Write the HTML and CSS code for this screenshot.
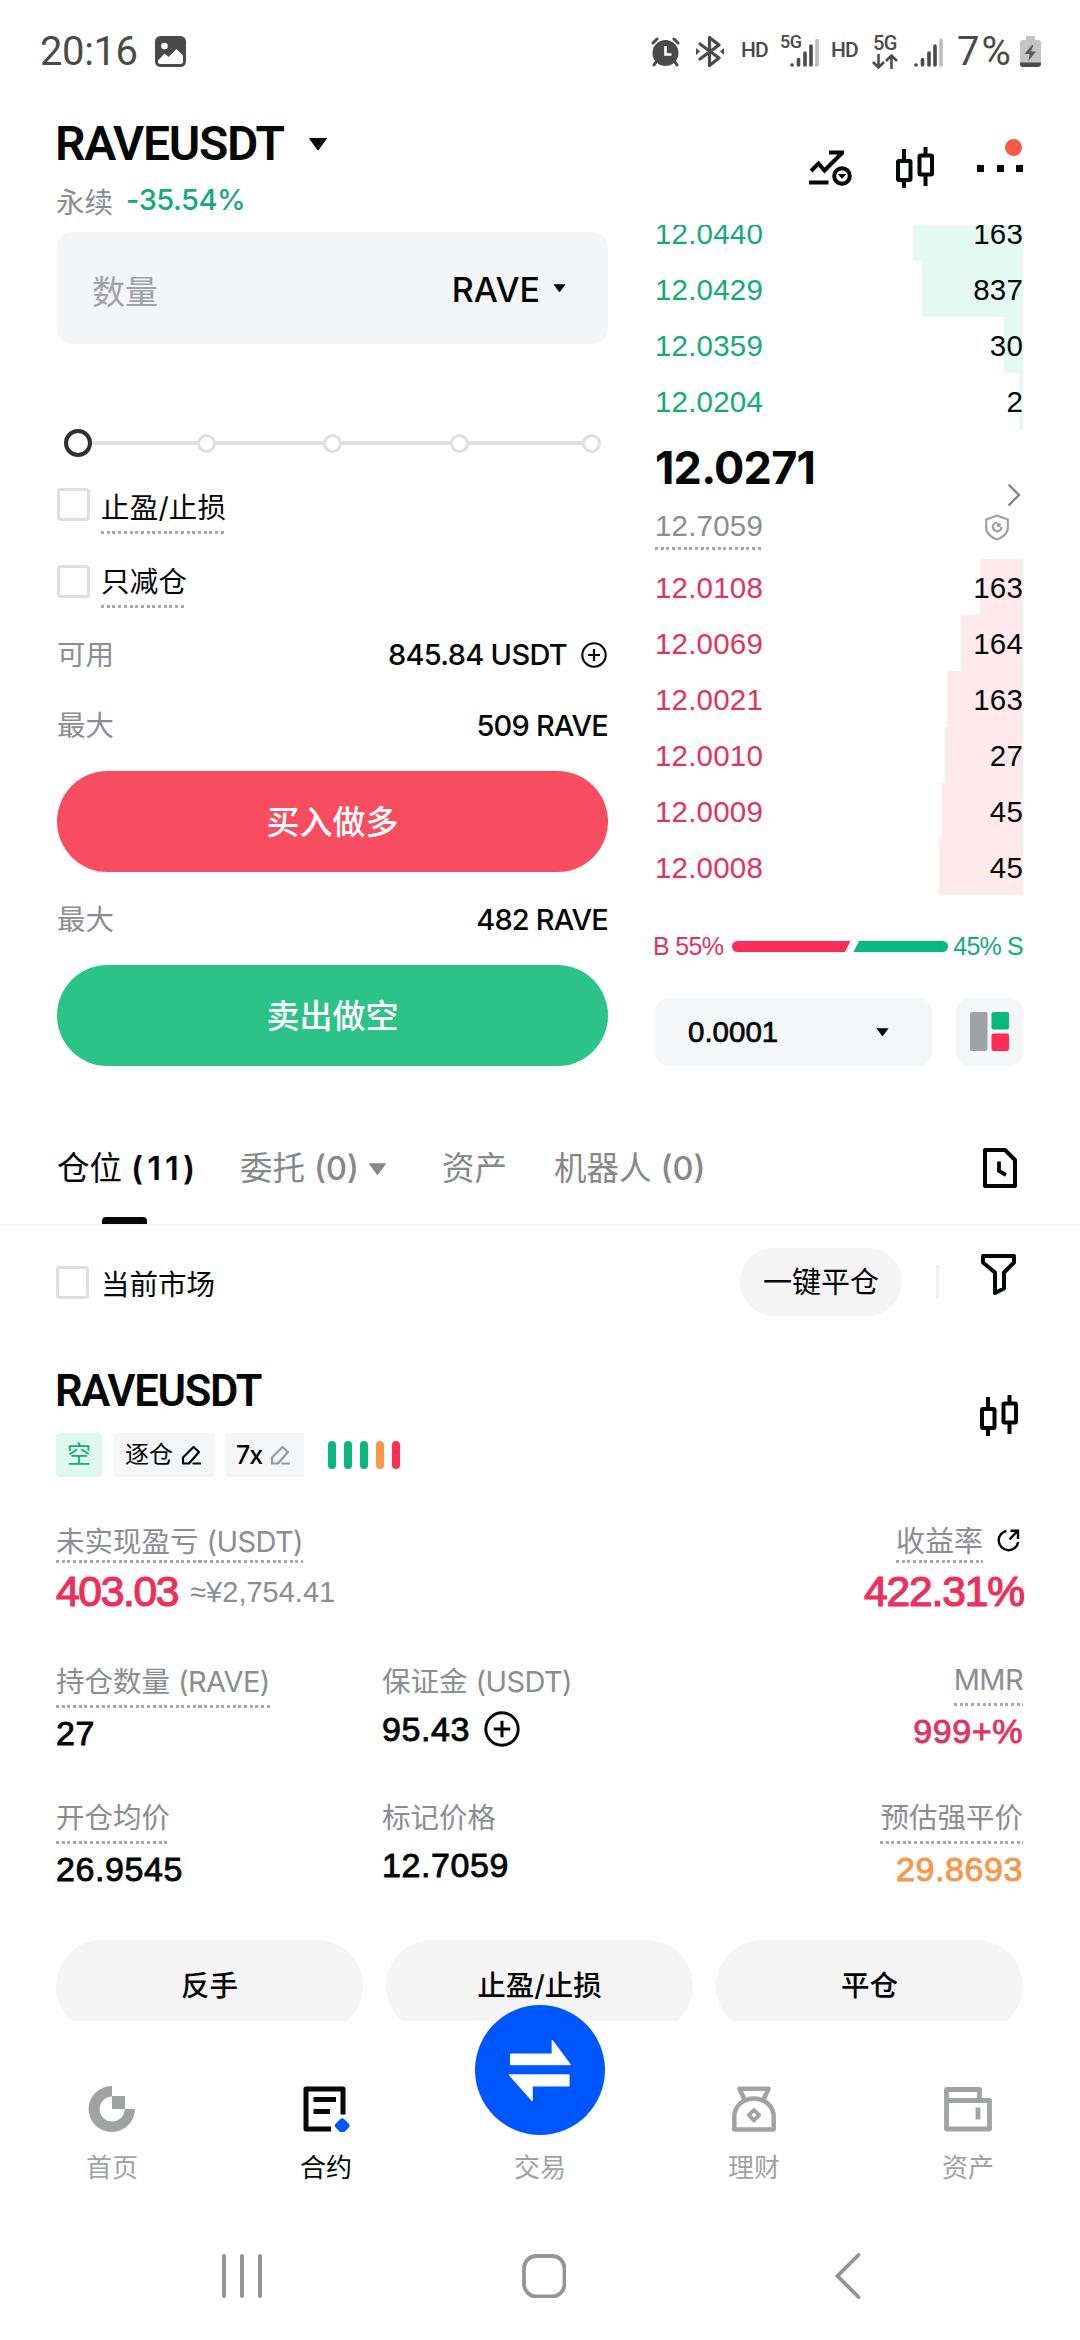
FILE: index.html
```html
<!DOCTYPE html>
<html lang="zh-CN">
<head>
<meta charset="utf-8">
<title>RAVEUSDT 永续</title>
<link rel="stylesheet" href="styles.css">
</head>
<body>
<svg class="defs" aria-hidden="true">
  <symbol id="candles" viewBox="0 0 38 42">
    <g fill="none" stroke="currentColor" stroke-width="4"><path d="M8 2v12M8 34v7M29.500 0v9M29.500 28v11"/><rect x="2" y="14" width="12.500" height="19" rx="1"/><rect x="23.500" y="8.500" width="12.500" height="19" rx="1"/></g>
  </symbol>
  <symbol id="caret" viewBox="0 0 20 13"><path d="M1.500 .5h17L10 12z" fill="currentColor" stroke="currentColor" stroke-linejoin="round"/></symbol>
  <symbol id="pencil" viewBox="0 0 21 20"><path d="M11.500 18.500H20M2 18.500v-6L12.500 2l5.500 5-10 11.500z" fill="none" stroke="currentColor" stroke-width="2.200" stroke-linejoin="round"/></symbol>
  <symbol id="plus" viewBox="0 0 26 26"><circle cx="13" cy="13" r="11.700" fill="none" stroke="currentColor" stroke-width="2.100"/><path d="M13 7v12M7 13h12" stroke="currentColor" stroke-width="2.200"/></symbol>
</svg>

<header class="status">
  <span class="clock">20:16</span>
  <svg class="st-photo" viewBox="0 0 31 31"><rect width="31" height="31" rx="5.500" fill="#4a4a4a"/><circle cx="9.500" cy="10" r="3.300" fill="#fff"/><path d="M3 24.500l6.500-7 4 3.500 8-8 6.500 6.500v6a2.500 2.500 0 0 1-2.500 2.500h-20A2.500 2.500 0 0 1 3 25.500z" fill="#fff"/></svg>
  <span class="grow"></span>
  <svg class="st-alarm" viewBox="0 0 29 30"><g fill="none" stroke="#4a4a4a" stroke-width="3" stroke-linecap="round"><path d="M2 6l4-4M27 6l-4-4M5 25l-2 3M24 25l2 3"/></g><circle cx="14.500" cy="16" r="13" fill="#4a4a4a"/><path d="M14.500 9v8.500h6" fill="none" stroke="#fff" stroke-width="2.600"/></svg>
  <svg class="st-bt" viewBox="0 0 28 31"><path d="M4 8l19 14-9.500 7.500v-28L23 9 4 23" fill="none" stroke="#4a4a4a" stroke-width="3.200" stroke-linejoin="round" stroke-linecap="round"/><path d="M0 12l4 3.500L0 19zM28 12l-4 3.500 4 3.500z" fill="#4a4a4a"/></svg>
  <span class="hd">HD</span>
  <span class="g5 g5-a">5G</span>
  <svg class="st-sig sig-a" viewBox="0 0 29 29"><g stroke="#4a4a4a" stroke-width="3.600" stroke-linecap="round"><path d="M2 27h.1M8.500 21.500V27M15 15v12M21 8v19"/><path d="M27 2.500V27" stroke="#bdbdbd"/></g></svg>
  <span class="hd hd-b">HD</span>
  <span class="g5-col"><span class="g5">5G</span><svg viewBox="0 0 26 15"><path d="M6.500 0v13M1 8l5.500 5.500L12 8M19.500 15V2M14 7l5.500-5.500L25 7" fill="none" stroke="#4a4a4a" stroke-width="2.500"/></svg></span>
  <svg class="st-sig sig-b" viewBox="0 0 29 29"><g stroke="#4a4a4a" stroke-width="3.600" stroke-linecap="round"><path d="M2 27h.1M8.500 21.500V27M15 15v12M21 8v19"/><path d="M27 2.500V27" stroke="#bdbdbd"/></g></svg>
  <span class="pct">7%</span>
  <svg class="st-bat" viewBox="0 0 21 31"><path d="M6 0h9v4h3a3 3 0 0 1 3 3v20H0V7a3 3 0 0 1 3-3h3z" fill="#c4c4c4"/><path d="M0 26.500h21V28a3 3 0 0 1-3 3H3a3 3 0 0 1-3-3z" fill="#4a4a4a"/><path d="M12 9L4.500 18h5L8.500 25l7.500-9.500h-5L13.500 9z" fill="#5c5c5c"/></svg>
</header>

<section class="head">
  <div class="pair">
    <div class="pair-name"><h1>RAVEUSDT</h1><svg class="caret-l"><use href="#caret"/></svg></div>
    <div class="pair-sub"><span>永续</span><b>-35.54%</b></div>
  </div>
  <div class="tools">
    <svg class="t-chart" viewBox="0 0 43 36"><g fill="none" stroke="#060707" stroke-width="4"><path d="M2 21l7.500-7.500 6 7L33.500 2.500M20 2.500h15M0 32.500h19.500"/><circle cx="33" cy="26" r="7.800" stroke-width="4"/></g><path d="M28.800 24h8.400L33 29z" fill="#060707"/></svg>
    <svg class="t-candles"><use href="#candles"/></svg>
    <span class="more"><i></i><i></i><i></i><em></em></span>
  </div>
</section>

<main class="trade">
  <div class="form">
    <div class="amount"><span class="ph">数量</span><span class="unit">RAVE</span><svg class="caret-s"><use href="#caret"/></svg></div>
    <div class="slider"><i class="on"></i><s></s><i></i><s></s><i></i><s></s><i></i><s class="last"></s><i></i></div>
    <div class="check"><i class="box"></i><span class="dot">止盈/止损</span></div>
    <div class="check check-2"><i class="box"></i><span class="dot">只减仓</span></div>
    <div class="kv avail"><span>可用</span><b class="ls-avail">845.84 USDT</b><svg class="plus-s"><use href="#plus"/></svg></div>
    <div class="kv max-a"><span>最大</span><b>509 RAVE</b></div>
    <button class="cta buy">买入做多</button>
    <div class="kv max-b"><span>最大</span><b>482 RAVE</b></div>
    <button class="cta sell">卖出做空</button>
  </div>

  <div class="book">
    <div class="asks">
      <div class="row"><span>12.0440</span><em style="width:110px">163</em></div>
      <div class="row"><span>12.0429</span><em style="width:101px">837</em></div>
      <div class="row"><span>12.0359</span><em style="width:19px">30</em></div>
      <div class="row"><span>12.0204</span><em style="width:4px">2</em></div>
    </div>
    <div class="mid">
      <div><div class="last-price">12.0271</div><div class="mark dot">12.7059</div></div>
      <div class="mid-icons">
        <svg class="chev" viewBox="0 0 14 24"><path d="M1.500 1.500L12 12 1.500 22.500" fill="none" stroke="#85888b" stroke-width="2.400"/></svg>
        <svg class="shield" viewBox="0 0 22 25"><g fill="none" stroke="#a0a2a4"><path d="M11 1.500L21 5v8c0 5-5 9-10 10.500C6 22 1 18 1 13V5z" stroke-width="2"/><path d="M11 8a4 4 0 1 0 4.200 4.200" stroke-width="2.200"/></g><rect x="11" y="8.500" width="3.500" height="3.500" fill="#a0a2a4"/></svg>
      </div>
    </div>
    <div class="bids">
      <div class="row"><span>12.0108</span><em style="width:43px">163</em></div>
      <div class="row"><span>12.0069</span><em style="width:62px">164</em></div>
      <div class="row"><span>12.0021</span><em style="width:76px">163</em></div>
      <div class="row"><span>12.0010</span><em style="width:78px">27</em></div>
      <div class="row"><span>12.0009</span><em style="width:81px">45</em></div>
      <div class="row"><span>12.0008</span><em style="width:84px">45</em></div>
    </div>
    <div class="ratio"><span class="b">B 55%</span>
      <svg viewBox="0 0 216 11"><path d="M5.500 0H118.500L113 11H5.500a5.500 5.500 0 0 1 0-11z" fill="#fd2c59"/><path d="M127 0h83.500a5.500 5.500 0 0 1 0 11H121.500z" fill="#07b97c"/></svg>
      <span class="s">45% S</span></div>
    <div class="prec"><div class="select"><span>0.0001</span><svg class="caret-s"><use href="#caret"/></svg></div>
      <div class="layout"><svg viewBox="0 0 39 39"><rect width="17.500" height="39" rx="2" fill="#a0a3a6"/><rect x="21.500" width="17.500" height="17.500" rx="2" fill="#07b97c"/><rect x="21.500" y="21.500" width="17.500" height="17.500" rx="2" fill="#fd2c59"/></svg></div></div>
  </div>
</main>

<nav class="tabs">
  <span class="tab on">仓位 <b>(11)</b></span>
  <span class="tab t2">委托 <b>(0)</b><svg class="caret-t"><use href="#caret"/></svg></span>
  <span class="tab t3">资产</span>
  <span class="tab t4">机器人 <b>(0)</b></span>
  <svg class="history" viewBox="0 0 34 40"><path d="M2 2h20l10 10v26H2z" fill="none" stroke="#060707" stroke-width="4" stroke-linejoin="round"/><path d="M16 13.500V23l7 4" fill="none" stroke="#060707" stroke-width="3.800"/></svg>
</nav>

<section class="filter">
  <i class="box"></i><span class="cur">当前市场</span>
  <button class="closeall">一键平仓</button>
  <i class="vr"></i>
  <svg class="funnel" viewBox="0 0 35 41"><path d="M2 2h31v6.500L23 18.500v16l-9 4.500V18.500L2 8.500z" fill="none" stroke="#060707" stroke-width="4" stroke-linejoin="round"/></svg>
</section>

<section class="position">
  <div class="pos-head">
    <div>
      <h2>RAVEUSDT</h2>
      <div class="tags">
        <span class="tag short">空</span>
        <span class="tag mode">逐仓<svg><use href="#pencil"/></svg></span>
        <span class="tag lev">7x<svg><use href="#pencil"/></svg></span>
        <span class="adl"><i></i><i></i><i></i><i class="o"></i><i class="r"></i></span>
      </div>
    </div>
    <svg class="p-candles"><use href="#candles"/></svg>
  </div>

  <div class="pnl">
    <div><span class="lab dot">未实现盈亏 <u>(USDT)</u></span><div class="big"><b>403.03</b><small>≈¥2,754.41</small></div></div>
    <div class="right"><div class="roi"><span class="lab dot">收益率</span><svg viewBox="0 0 23 23"><g fill="none" stroke="#060707" stroke-width="2.400"><path d="M9.500 1.800A9.800 9.800 0 1 0 21.200 13"/><path d="M12.500 10.500L20.500 2M13.500 1.700H21V10"/></g></svg></div><div class="big pc"><b>422.31%</b></div></div>
  </div>

  <div class="stats">
    <div class="st"><span class="lab dot">持仓数量 <u>(RAVE)</u></span><b>27</b></div>
    <div class="st flat"><span class="lab">保证金 <u>(USDT)</u></span><b class="margin">95.43<svg><use href="#plus"/></svg></b></div>
    <div class="st right mmr"><span class="lab dot">MMR</span><b class="red">999+%</b></div>
    <div class="st"><span class="lab dot">开仓均价</span><b>26.9545</b></div>
    <div class="st flat"><span class="lab">标记价格</span><b>12.7059</b></div>
    <div class="st right"><span class="lab dot">预估强平价</span><b class="orange">29.8693</b></div>
  </div>

  <div class="actions"><button>反手</button><button>止盈/止损</button><button>平仓</button></div>
</section>

<footer class="nav">
  <a><svg viewBox="0 0 48 46"><path d="M24 0v10.500a12.500 12.500 0 1 0 12.700 12.500H47A23.200 23 0 1 1 24 0z" fill="#a0a2a4"/><rect x="24" y="10" width="13" height="13" fill="#a0a2a4"/></svg>首页</a>
  <a class="on"><svg viewBox="0 0 48 46"><path d="M41 28.500V3H4v40h25" fill="none" stroke="#060707" stroke-width="5" stroke-linejoin="round"/><path d="M11.500 13.500H34M11.500 25.500H28" stroke="#060707" stroke-width="5"/><rect x="34.200" y="33.700" width="12" height="12" rx="3" transform="rotate(45 40.200 39.700)" fill="#0056ff"/></svg>合约</a>
  <a class="swap"><span class="fab"><svg viewBox="0 0 64 64"><path d="M1.500 15.500H44.500V1L63.500 26.500H1.500z M62 37H0L24 64V48.500H62z" fill="#fff" stroke="#fff"/></svg></span>交易</a>
  <a><svg viewBox="0 0 48 46"><g fill="none" stroke="#a0a2a4" stroke-width="4.500" stroke-linejoin="round"><path d="M14 12.500L9.500 2.800h29L34 12.500M4.300 43.500V31c0-11 9-18.500 19.700-18.500S43.700 20 43.700 31v12.500z"/><path d="M24 24l5.200 5.200L24 34.400l-5.200-5.200z" stroke-width="3.800"/></g></svg>理财</a>
  <a><svg viewBox="0 0 48 46"><path d="M2.500 14.500h43V43h-43zM2.500 14.500V3.500h33v11M34 21.500v12" fill="none" stroke="#a0a2a4" stroke-width="4.800" stroke-linejoin="round"/></svg>资产</a>
</footer>

<div class="sys">
  <svg viewBox="0 0 40 44"><path d="M2 2v40M20 2v40M38 2v40" stroke="#949494" stroke-width="4" stroke-linecap="round"/></svg>
  <svg class="homekey" viewBox="0 0 44 44"><rect x="2" y="2" width="40.500" height="40.500" rx="12.500" fill="none" stroke="#949494" stroke-width="3.800"/></svg>
  <svg class="back" viewBox="0 0 26 46"><path d="M23.500 2L2.500 23l21 21" fill="none" stroke="#949494" stroke-width="3.800" stroke-linecap="round"/></svg>
</div>
</body>
</html>
```
FILE: styles.css
```css
* { box-sizing: border-box; margin: 0; padding: 0; }
html, body { width: 1080px; height: 2340px; overflow: hidden; background: #fefefe; }
body { font-family: Inter, "Noto Sans CJK SC", sans-serif; font-size: 28.500px; color: #060707; white-space: nowrap; }
i, em, u, s { font-style: normal; text-decoration: none; }
b { font-weight: 500; }
svg { display: block; flex: none; }
button { border: 0; font-family: inherit; color: inherit; }
.defs { position: absolute; width: 0; height: 0; }
.grow { flex: 1; }
.box { flex: none; width: 33px; height: 33px; border: 3px solid #dfdfe0; border-radius: 4px; background: #fff; }
.dot { background: repeating-linear-gradient(90deg, #a6a8a9 0 3px, transparent 3px 5.700px) left bottom / 100% 3px no-repeat; }

/* status bar */
.status { display: flex; align-items: flex-start; height: 105px; padding: 36px 39px 0 40px; color: #4a4a4a; font-family: Roboto, sans-serif; }
.clock { font-size: 40px; line-height: 31px; width: 115px; letter-spacing: -.4px; }
.st-photo { width: 31px; height: 31px; }
.st-alarm { width: 29px; height: 30px; margin-top: 1px; }
.st-bt { width: 28px; height: 31px; margin-left: 16px; }
.hd { font-size: 21px; font-weight: 500; line-height: 29px; width: 39px; margin-left: 17px; letter-spacing: -1px; }
.g5 { font-size: 18px; font-weight: 500; line-height: 12px; letter-spacing: -.5px; }
.g5-a { width: 10px; }
.st-sig { width: 29px; height: 29px; margin-top: 2px; }
.hd-b { margin-left: 12px; width: 41px; }
.g5-col { display: flex; flex-direction: column; align-items: center; width: 26px; gap: 4px; }
.g5-col .g5 { font-size: 20px; line-height: 14px; }
.g5-col svg { width: 26px; height: 15px; }
.sig-b { margin-left: 16px; }
.pct { font-size: 40px; line-height: 31px; margin-left: 14px; width: 63px; letter-spacing: 2px; }
.st-bat { width: 21px; height: 31px; }

/* header */
.head { display: flex; justify-content: space-between; height: 120px; padding: 0 57px 0 56px; }
.pair-name { display: flex; align-items: center; height: 78px; }
h1 { font: 600 48px/80px Roboto, sans-serif; letter-spacing: -1.300px; width: 253px; margin-left: -1px; }
.caret-l { width: 20px; height: 13px; }
.pair-sub { display: flex; gap: 13px; height: 36px; line-height: 36px; color: #8b8d90; }
.pair-sub span { padding-top: 2px; }
.pair-sub b { font-size: 29px; line-height: 33px; color: #14ab78; letter-spacing: -.5px; }
.tools { display: flex; align-items: flex-start; padding-top: 42px; }
.t-chart { width: 43px; height: 36px; margin-top: 3px; }
.t-candles { width: 38px; height: 42px; margin-left: 44px; }
.more { position: relative; display: flex; justify-content: space-between; width: 46px; margin-left: 43px; padding-top: 18px; }
.more i { width: 7px; height: 7px; background: #060707; }
.more em { position: absolute; right: 1px; top: -8px; width: 17px; height: 17px; border-radius: 50%; background: #fb5a49; }

/* trade area */
.trade { display: flex; justify-content: space-between; height: 905px; padding: 0 57px 0 57px; }
.form { width: 551px; padding-top: 7px; }
.amount { display: flex; align-items: center; height: 112px; padding: 0 42px 0 35px; border-radius: 16px; background: #f3f5f7; }
.ph { font-size: 33px; color: #a0a2a5; flex: 1; padding-top: 4px; }
.unit { font-size: 34px; font-weight: 500; padding-top: 2px; }
.caret-s { width: 13px; height: 9px; margin-left: 13px; }
.slider { display: flex; align-items: center; height: 28px; margin: 85px 7px 0 7px; }
.slider i { flex: none; width: 19px; height: 19px; border: 3px solid #dfdfe0; border-radius: 50%; background: #fff; }
.slider .on { width: 28px; height: 28px; border: 4px solid #2f3031; }
.slider s { width: 107.500px; height: 4px; background: #dfdfe0; }
.slider .last { flex: 1; }
.slider .on + s { width: 104.500px; }
.check { display: flex; gap: 12px; height: 46px; margin-top: 31px; line-height: 40px; letter-spacing: .2px; }
.check .dot { height: 46px; margin-left: -1px; }
.check-2 { margin-top: 28px; }
.check-2 .box { margin-top: 3px; }
.kv { display: flex; align-items: center; justify-content: space-between; height: 40px; line-height: 40px; }
.kv span { color: #8b8d90; flex: 1; }
.kv b { font-size: 29px; letter-spacing: -.8px; }
.kv .ls-avail { letter-spacing: -.7px; }
.avail { margin-top: 27px; }
.plus-s { width: 26px; height: 26px; margin: 0 1px 0 14px; }
.max-a { margin-top: 31px; }
.cta { display: block; width: 551px; height: 101px; margin-top: 25px; border-radius: 51px; color: #fff; font-size: 33px; font-weight: 500; line-height: 103px; }
.buy { background: #f84d60; }
.sell { background: #2cc388; }
.max-b { margin-top: 28px; }

.book { width: 368px; }
.asks { display: flex; flex-direction: column; justify-content: flex-end; height: 204px; overflow: hidden; }
.row { display: flex; justify-content: space-between; flex: none; height: 56px; font: 29.500px/57px "Liberation Sans", sans-serif; letter-spacing: .2px; }
.row em { direction: rtl; }
.asks span { color: #14ab78; }
.asks em { background: #e3f9f1; }
.bids span { color: #de3560; }
.bids em { background: #fee9ed; }
.mid { display: flex; justify-content: space-between; height: 130px; padding-top: 14px; }
.last-price { font-size: 45px; font-weight: 700; line-height: 50px; letter-spacing: -.8px; }
.mark { width: 108px; height: 47px; margin-top: 10px; font: 29.500px/45px "Liberation Sans", sans-serif; color: #8b8d90; letter-spacing: .2px; }
.mid-icons { display: flex; flex-direction: column; align-items: flex-end; padding-top: 40px; }
.chev { width: 14px; height: 24px; margin-right: 2px; }
.shield { width: 24px; height: 27px; margin: 7px 14px 0 0; }
.ratio { display: flex; align-items: center; justify-content: space-between; height: 30px; margin-top: 36px; font: 25px/31px "Liberation Sans", sans-serif; }
.ratio svg { width: 216px; height: 11px; }
.ratio .b { color: #de3560; letter-spacing: -.7px; width: 74px; margin-left: -2px; }
.ratio .s { color: #14ab78; letter-spacing: -.8px; }
.prec { display: flex; justify-content: space-between; margin-top: 37px; }
.select { display: flex; align-items: center; justify-content: space-between; width: 277px; height: 68px; padding: 0 43px 0 33px; border-radius: 14px; background: #f4f6f7; font: 29.500px/68px "Liberation Sans", sans-serif; -webkit-text-stroke: .7px #060707; }
.layout { width: 67px; height: 68px; padding: 14px; border-radius: 14px; background: #f4f6f7; }
.layout svg { width: 39px; height: 39px; }

/* tabs */
.tabs { display: flex; height: 96px; padding: 0 63px 0 57px; border-bottom: 2px solid #f4f4f4; font-size: 32.500px; line-height: 78px; color: #85878a; }
.tab { display: flex; gap: 9px; }
.tab.on { position: relative; color: #060707; width: 183px; }
.tab.on b { font-weight: 600; letter-spacing: 4px; }
.tab.on::after { content: ""; position: absolute; left: 45px; bottom: 0; width: 45px; height: 7px; border-radius: 4px 4px 0 0; background: #060707; }
.caret-t { width: 19px; height: 13px; margin-top: 33px; }
.t2 { width: 202px; }
.t3 { width: 112px; }
.history { width: 34px; height: 40px; margin: 18px 0 0 auto; }

/* filter row */
.filter { display: flex; align-items: center; height: 90px; padding: 22px 64px 0 56px; }
.cur { margin-left: 12px; flex: 1; }
.closeall { width: 162px; height: 68px; border-radius: 34px; background: #f5f5f5; font-size: 29px; line-height: 67px; }
.vr { width: 3px; height: 34px; margin-left: 34px; background: #efefef; }
.funnel { width: 35px; height: 41px; margin: 0 0 15px 42px; }

/* position card */
.position { padding: 0 57px 0 56px; }
.pos-head { display: flex; justify-content: space-between; margin-top: 50px; }
h2 { font: 600 43.500px/52px Roboto, sans-serif; height: 50px; letter-spacing: -1.300px; margin-left: -1px; }
.tags { display: flex; align-items: center; margin-top: 17px; height: 44px; font-size: 24px; line-height: 46px; }
.tag { display: flex; align-items: center; height: 44px; border-radius: 4px; background: #f4f6f7; }
.short { width: 46px; justify-content: center; background: #dff8ed; color: #14ab78; }
.mode { width: 101px; margin-left: 12px; padding-left: 11px; gap: 8px; }
.lev { width: 79px; margin-left: 10px; padding-left: 11px; gap: 8px; font-size: 25px; font-weight: 500; letter-spacing: -1px; border-radius: 4px 0 0 4px; }
.tag svg { width: 21px; height: 20px; }
.lev svg { color: #98999b; }
.adl { display: flex; gap: 8px; margin-left: 24px; }
.adl i { width: 8px; height: 28px; border-radius: 4px; background: #0cb77d; }
.adl .o { background: #fb974b; }
.adl .r { background: #fd2f57; }
.p-candles { width: 38px; height: 42px; margin: 29px 5px 0 0; }

.lab { display: block; width: max-content; color: #8b8d90; line-height: 36px; }
.lab u { font-size: 29px; letter-spacing: -.6px; }
.right { display: flex; flex-direction: column; align-items: flex-end; }
.pnl { display: flex; justify-content: space-between; margin-top: 47px; }
.pnl .lab { height: 39px; }
.big { display: flex; align-items: center; height: 46px; margin-top: 6px; line-height: 47px; }
.big b { font: 42.500px/48px "Liberation Sans", sans-serif; letter-spacing: -1.300px; color: #ee2f5b; -webkit-text-stroke: 1.200px #ee2f5b; }
.big small { font: 29px/48px "Liberation Sans", sans-serif; margin-left: 12px; color: #8b8d90; }
.big.pc b { letter-spacing: -1.100px; margin-right: -1px; }
.roi { display: flex; gap: 14px; padding-right: 3px; }
.roi .lab { font-size: 29px; }
.roi svg { width: 23px; height: 23px; margin-top: 5px; }

.stats { display: grid; grid-template-columns: 326px 1fr auto; margin-top: 49px; row-gap: 14px; }
.st { height: 122px; }
.st .lab { height: 44px; }
.st > b { display: block; height: 48px; margin-top: 1px; font: 34px/49px "Liberation Sans", sans-serif; letter-spacing: .6px; -webkit-text-stroke: .9px currentColor; }
.flat .lab { height: 40px; }
.margin { display: flex !important; align-items: center; gap: 14px; }
.margin svg { width: 36px; height: 36px; -webkit-text-stroke: 0; }
.mmr .lab { height: 42px; font-size: 29px; line-height: 32px; letter-spacing: -.6px; }
.right .red { color: #de3560; }
.right .orange { color: #f2984f; }

.actions { display: flex; justify-content: space-between; height: 81px; margin-top: 18px; overflow: hidden; }
.actions button { width: 307px; height: 92px; border-radius: 46px; background: #f5f5f5; font-size: 28.500px; font-weight: 500; line-height: 90px; }

/* bottom navigation */
.nav { display: flex; height: 178px; padding: 65px 5px 0; font-size: 26px; line-height: 36px; color: #a0a2a4; }
.nav a { display: flex; flex-direction: column; align-items: center; gap: 18px; width: 214px; }
.nav a > svg { width: 48px; height: 46px; }
.nav .on { color: #060707; }
.fab { display: flex; align-items: center; justify-content: center; width: 130px; height: 130px; margin: -81px 0 -3px; border-radius: 50%; background: #0056ff; }
.fab svg { width: 62px; height: 64px; }
.sys { display: flex; align-items: center; height: 154px; padding: 0 219px 0 222px; }
.sys svg { width: 40px; height: 44px; }
.sys .homekey { width: 44px; margin-left: 260px; }
.sys .back { width: 26px; height: 46px; margin-left: auto; }
```
